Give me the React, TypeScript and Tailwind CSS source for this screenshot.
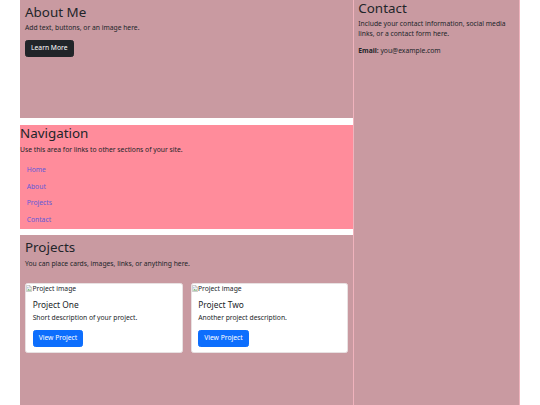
import React from "react";

function BrokenImage() {
  return (
    <svg width="6" height="7" viewBox="0 0 16 18" className="inline-block align-[-1px] mr-[0.5px]">
      <path d="M1 1h9l5 5v11H1z" fill="#f3f3f3" stroke="#9a9a9a" strokeWidth="1.2" />
      <path d="M10 1v5h5" fill="none" stroke="#9a9a9a" strokeWidth="1.2" />
      <path d="M3 14l3-4 3 3 2-2 3 3z" fill="#5aa55a" />
      <circle cx="5" cy="7" r="1.5" fill="#5b8fd6" />
    </svg>
  );
}

function Card({ title, desc }: { title: string; desc: string }) {
  return (
    <div className="flex-1 bg-white border border-[#e8e1e2] rounded-[2.5px] overflow-hidden">
      <div className="h-[10px] whitespace-nowrap">
        <BrokenImage />
        Project image
      </div>
      <div className="px-[6.67px] pt-[6px] pb-[5.5px]">
        <div className="text-[8.4px] leading-[10px] mb-[3.5px] font-normal">{title}</div>
        <p className="mb-[6.5px]">{desc}</p>
        <button className="block bg-[#0d6efd] text-white text-[6.75px] leading-[10px] px-[5px] py-[2.5px] rounded-[2.5px] border border-[#0d6efd]">
          View Project
        </button>
      </div>
    </div>
  );
}

export default function App() {
  const links = ["Home", "About", "Projects", "Contact"];
  return (
    <div className="w-[540px] h-[405px] bg-white overflow-hidden text-[#212529] font-['Noto_Sans',sans-serif] text-[6.75px] leading-[10px]">
      <div className="flex ml-[20px] w-[500px] h-full">
        <div className="w-[333px] flex flex-col">
          <section className="h-[118px] bg-[#c99aa1] px-[5px] pt-[3.65px] mb-[6.5px]">
            <h2 className="text-[13.4px] leading-[16px] font-normal mb-[3.33px]">About Me</h2>
            <p className="mb-[6.67px]">Add text, buttons, or an image here.</p>
            <button className="block bg-[#212529] text-white text-[6.75px] leading-[10px] px-[5px] py-[2.5px] rounded-[2.5px] border border-[#212529]">
              Learn More
            </button>
          </section>
          <section className="bg-[#ff8c9b] pt-[0.5px] mb-[6.5px]">
            <h2 className="text-[13.4px] leading-[16px] font-normal mb-[3.6px]">Navigation</h2>
            <p className="mb-[6.67px]">Use this area for links to other sections of your site.</p>
            <ul className="flex flex-col">
              {links.map((l) => (
                <li key={l}>
                  <a className="block px-[6.67px] py-[3.45px] text-[#5f5ad8]">{l}</a>
                </li>
              ))}
            </ul>
          </section>
          <section className="flex-1 bg-[#c99aa1] px-[5px] pt-[4px]">
            <h2 className="text-[13.4px] leading-[16px] font-normal mb-[3.4px]">Projects</h2>
            <p className="mb-[6.67px]">You can place cards, images, links, or anything here.</p>
            <div className="flex gap-[8px] mt-[14px]">
              <Card title="Project One" desc="Short description of your project." />
              <Card title="Project Two" desc="Another project description." />
            </div>
          </section>
        </div>
        <div className="w-[167px] h-full bg-[#c99aa1] border-x border-[#f0b3bd] px-[4.3px]">
          <h2 className="text-[13.4px] leading-[16px] font-normal mb-[3.33px]">Contact</h2>
          <p className="mb-[6.67px]">
            Include your contact information, social media links, or a contact form here.
          </p>
          <p>
            <strong className="font-bold">Email:</strong> you@example.com
          </p>
        </div>
      </div>
    </div>
  );
}
